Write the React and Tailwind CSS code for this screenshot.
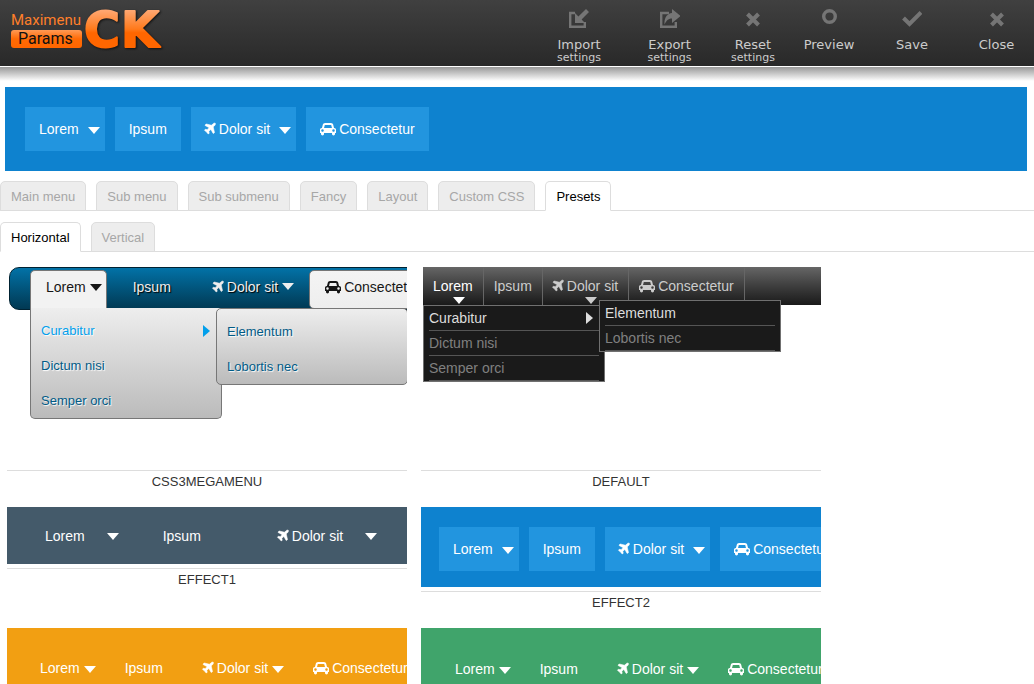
import { useState } from 'react';
import clsx from 'clsx';

const TOOLS = [
  { label: 'Import', sub: 'settings', icon: 'import', width: 'w-[94px]' },
  { label: 'Export', sub: 'settings', icon: 'export', width: 'w-[87px]' },
  { label: 'Reset', sub: 'settings', icon: 'cross', width: 'w-[80px]' },
  { label: 'Preview', icon: 'circle', width: 'w-[72px]' },
  { label: 'Save', icon: 'check', width: 'w-[94px]' },
  { label: 'Close', icon: 'cross', width: 'w-[75px]' },
];

const ITEMS = [
  { label: 'Lorem', arrow: true },
  { label: 'Ipsum' },
  { label: 'Dolor sit', icon: 'plane', arrow: true },
  { label: 'Consectetur', icon: 'car' },
];

const TABS = ['Main menu', 'Sub menu', 'Sub submenu', 'Fancy', 'Layout', 'Custom CSS', 'Presets'];

function ToolIcon({ name }) {
  return (
    <svg width="20" height="20" viewBox="0 0 20 20" fill="none" stroke="currentColor" aria-hidden="true">
      {name === 'import' && (
        <>
          <path d="M6 4H1.200v13.800h14.600V13" strokeWidth="2.4" />
          <path d="M6 14V4l3.400 3.400L17 0l3 3-7.400 7.600L16 14z" fill="currentColor" stroke="none" />
        </>
      )}
      {name === 'export' && (
        <>
          <path d="M9 4H1.200v13.800h14.600V13" strokeWidth="2.400" />
          <path d="M12 0l8.500 7-8.500 7V9.500C9 9.500 6.500 11 4.500 15.500 4 9 7 4.500 12 4z" fill="currentColor" stroke="none" />
        </>
      )}
      {name === 'cross' && <path d="M4.500 5l11 11M15.500 5l-11 11" strokeWidth="4" />}
      {name === 'circle' && <circle cx="10.500" cy="7.500" r="5.800" strokeWidth="3.400" />}
      {name === 'check' && <path d="M1.500 9l6 6L19 3.500" strokeWidth="4" />}
    </svg>
  );
}

function PlaneIcon() {
  return (
    <svg
      className="h-[14px] w-[14px] -ml-[2px] mr-[2px] shrink-0"
      viewBox="0 0 1792 1792"
      fill="currentColor"
      stroke="currentColor"
      strokeWidth="70"
      aria-hidden="true"
    >
      <path d="M1568 160q44 52 12 148t-108 172l-161 161 160 696q5 19-12 33l-128 96q-7 6-19 6-4 0-7-1-15-3-21-16l-279-508-259 259 53 194q5 17-8 31l-96 96q-9 9-23 9h-2q-15-2-24-13l-189-252-252-189q-11-7-13-23-1-13 9-25l96-97q9-9 23-9 6 0 8 1l194 53 259-259-508-279q-14-8-17-24-2-16 9-27l128-128q14-13 30-8l665 159 160-160q76-76 172-108t148 12z" />
    </svg>
  );
}

function CarIcon() {
  return (
    <svg className="h-[14px] w-4 mr-[3px] shrink-0" viewBox="0 0 2048 1792" fill="currentColor" aria-hidden="true">
      <path d="M480 1088q0-66-47-113t-113-47-113 47-47 113 47 113 113 47 113-47 47-113zm36-320h1016l-89-357q-2-8-14-17.500t-21-9.500h-768q-9 0-21 9.500t-14 17.500zm1372 320q0-66-47-113t-113-47-113 47-47 113 47 113 113 47 113-47 47-113zm160-96v384q0 14-9 23t-23 9h-96v128q0 80-56 136t-136 56-136-56-56-136v-128h-1024v128q0 80-56 136t-136 56-136-56-56-136v-128h-96q-14 0-23-9t-9-23v-384q0-93 65.500-158.500t158.500-65.500h28l105-419q23-94 104-157.500t179-63.500h768q98 0 179 63.500t104 157.500l105 419h28q93 0 158.500 65.500t65.500 158.500z" />
    </svg>
  );
}

function Down({ className }) {
  return (
    <svg className={clsx('h-[7px] w-3 shrink-0', className)} viewBox="0 0 12 7" fill="currentColor" aria-hidden="true">
      <path d="M0 0h12L6 7z" />
    </svg>
  );
}

function Right({ className }) {
  return (
    <svg className={clsx('h-3 w-[7px] shrink-0', className)} viewBox="0 0 7 12" fill="currentColor" aria-hidden="true">
      <path d="M0 0l7 6-7 6z" />
    </svg>
  );
}

function Label({ item }) {
  return (
    <span className="flex items-center whitespace-nowrap">
      {item.icon === 'plane' && <PlaneIcon />}
      {item.icon === 'car' && <CarIcon />}
      <span>{item.label}</span>
    </span>
  );
}

// flat menu bar : every item is a link, the arrow sits after the label
function FlatMenu({ items = ITEMS, className, itemClass, plainClass, arrowClass }) {
  return (
    <ul className={clsx('flex text-sm text-white', className)}>
      {items.map((item) => (
        <li key={item.label} className="shrink-0">
          <a href="#" className={clsx('flex items-center', itemClass, item.arrow ? arrowClass : plainClass)}>
            <Label item={item} />
            {item.arrow && <Down className="mt-[2px]" />}
          </a>
        </li>
      ))}
    </ul>
  );
}

function EffectTiles({ className }) {
  return (
    <FlatMenu
      className={clsx('gap-[10px] bg-[#0e82cf]', className)}
      itemClass="h-11 bg-[#2295df]"
      plainClass="px-[14px]"
      arrowClass="pl-[14px] pr-[5px] gap-[9px]"
    />
  );
}

function MegaMenu() {
  return (
    <div className="relative h-[199px] pl-[2px] overflow-hidden">
      <ul className="flex gap-[10px] w-[480px] h-[43px] pl-5 pt-[2px] rounded-[10px] border border-[#002232] bg-linear-to-b from-[#0272a7] to-[#013953] text-sm text-[#eee]">
        {ITEMS.map((item, i) => (
          <li key={item.label} className="relative shrink-0">
            <a
              href="#"
              className={clsx(
                'flex h-[39px] items-center gap-1 pl-[15px] pb-[6px] border',
                item.arrow ? 'pr-1' : 'pr-[15px]',
                i === 0 && 'rounded-t-[5px] border-[#777] border-b-0 bg-[#f2f2f2] text-[#161616]',
                i === 3 && 'rounded-[5px] border-[#777] bg-linear-to-b from-[#f4f4f4] to-[#eee] text-[#161616]',
                (i === 1 || i === 2) && 'border-transparent text-shadow-[1px_1px_1px_#000]'
              )}
            >
              <Label item={item} />
              {item.arrow && <Down />}
            </a>
          </li>
        ))}
      </ul>
      {/* opened dropdown and its submenu */}
      <ul className="absolute left-[23px] top-[41px] w-[192px] h-[111px] pt-[5px] px-[10px] rounded-b-[5px] border border-t-0 border-[#777] bg-linear-to-b from-[#eee] to-[#bbb] text-[13px] text-[#015b86] text-shadow-[1px_1px_1px_#fff]">
        <li className="text-[#029feb]">
          <a href="#" className="flex h-[35px] items-center justify-between">
            Curabitur <Right className="mr-[1px]" />
          </a>
        </li>
        <li><a href="#" className="flex h-[35px] items-center">Dictum nisi</a></li>
        <li><a href="#" className="flex h-[35px] items-center">Semper orci</a></li>
      </ul>
      <ul className="absolute left-[209px] top-[41px] w-[192px] h-[77px] pt-[5px] px-[10px] rounded-[5px] border border-[#777] bg-linear-to-b from-[#eee] to-[#bbb] text-[13px] text-[#015b86] text-shadow-[1px_1px_1px_#fff]">
        <li><a href="#" className="flex h-[35px] items-center">Elementum</a></li>
        <li><a href="#" className="flex h-[35px] items-center">Lobortis nec</a></li>
      </ul>
    </div>
  );
}

function DefaultMenu() {
  return (
    <div className="relative h-[199px] pl-[2px] overflow-hidden">
      <ul className="flex h-[38px] bg-linear-to-b from-[#666] to-[#1a1a1a] text-sm text-[#ccc]">
        {ITEMS.map((item, i) => (
          <li key={item.label} className="relative border-r border-[#666]">
            <a href="#" className={clsx('flex h-[38px] items-center px-[10px]', i === 0 && 'text-white')}>
              <Label item={item} />
              {item.arrow && (
                <Down className={clsx('absolute top-[30px]', i === 0 ? 'left-[30px]' : 'left-[42px]')} />
              )}
            </a>
          </li>
        ))}
      </ul>
      <ul className="absolute left-[2px] top-[38px] w-[182px] px-[5px] border border-[#707070] bg-[#1a1a1a] text-sm text-[#808080]">
        <li className="border-b border-[#555] text-[#ddd]">
          <a href="#" className="flex h-6 items-center justify-between">
            Curabitur <Right className="mr-[6px]" />
          </a>
        </li>
        <li className="border-b border-[#555]"><a href="#" className="flex h-6 items-center">Dictum nisi</a></li>
        <li className="border-b border-[#555]"><a href="#" className="flex h-6 items-center">Semper orci</a></li>
      </ul>
      <ul className="absolute left-[178px] top-[33px] w-[182px] px-[5px] border border-[#707070] bg-[#1a1a1a] text-sm text-[#808080]">
        <li className="border-b border-[#555] text-[#ddd]"><a href="#" className="flex h-6 items-center">Elementum</a></li>
        <li className="border-b border-[#555]"><a href="#" className="flex h-6 items-center">Lobortis nec</a></li>
      </ul>
    </div>
  );
}

function Preset({ name, children }) {
  return (
    <figure className="min-w-0">
      <div className="overflow-hidden">{children}</div>
      {name && (
        <figcaption className="mt-1 border-t border-[#ddd] pt-[2px] text-center text-[13px] leading-[18px] text-[#333]">
          {name}
        </figcaption>
      )}
    </figure>
  );
}

function TabBar({ tabs, active, onSelect }) {
  return (
    <div role="tablist" className="flex gap-[10px] border-b border-[#ddd] text-[13px]">
      {tabs.map((tab) => (
        <button
          key={tab}
          type="button"
          role="tab"
          aria-selected={tab === active}
          onClick={() => onSelect(tab)}
          className={clsx(
            '-mb-px h-[30px] px-[10px] pt-[2px] rounded-t-[5px] border border-[#ddd] whitespace-nowrap',
            tab === active ? 'bg-white border-b-white text-black' : 'bg-[#ededed] text-[#a7a7a7]'
          )}
        >
          {tab}
        </button>
      ))}
    </div>
  );
}

function Logo() {
  return (
    <svg width="160" height="50" viewBox="0 0 160 50" className="overflow-visible" role="img" aria-label="Maximenu Params CK">
      <defs>
        <linearGradient id="ck" x1="0" y1="10" x2="0" y2="48" gradientUnits="userSpaceOnUse">
          <stop offset="0" stopColor="#ffa873" />
          <stop offset="0.500" stopColor="#ff7a1c" />
          <stop offset="0.600" stopColor="#ff6600" />
          <stop offset="1" stopColor="#ff6600" />
        </linearGradient>
        <linearGradient id="plate" x1="0" y1="0" x2="0" y2="1">
          <stop offset="0" stopColor="#ff9a55" />
          <stop offset="0.500" stopColor="#ff6a05" />
          <stop offset="1" stopColor="#ff6600" />
        </linearGradient>
      </defs>
      <text x="1" y="25" fontSize="15" fill="#ff7f2a" className="font-[Roboto,sans-serif]">Maximenu</text>
      <rect x="1" y="30" width="71" height="18" rx="3" fill="url(#plate)" />
      <text x="8" y="44" fontSize="16" fill="#111" className="font-[Roboto,sans-serif]">Params</text>
      <g
        fontSize="49"
        fontWeight="700"
        fill="url(#ck)"
        stroke="url(#ck)"
        strokeWidth="2"
        strokeLinejoin="round"
        className="font-['DejaVu_Sans',sans-serif] drop-shadow-[1px_1px_1px_#111]"
      >
        <text x="74" y="47">C</text>
        <text x="111" y="47">K</text>
      </g>
    </svg>
  );
}

export default function App() {
  const [tab, setTab] = useState('Presets');
  const [orientation, setOrientation] = useState('Horizontal');

  return (
    <div className="h-screen overflow-hidden bg-white font-['Liberation_Sans',Arial,sans-serif]">
      <header className="flex h-[66px] items-start justify-between bg-linear-to-b from-[#404040] to-[#292929] pl-[10px]">
        <Logo />
        <nav className="flex font-['DejaVu_Sans',Verdana,sans-serif] text-[#ccc]">
          {TOOLS.map((tool) => (
            <button key={tool.label} type="button" className={clsx('flex flex-col items-center pt-[9px]', tool.width)}>
              <span className="text-[#757575]"><ToolIcon name={tool.icon} /></span>
              <span className="mt-2 text-[13px] leading-4">{tool.label}</span>
              {tool.sub && <span className="text-[11px] leading-[10px]">{tool.sub}</span>}
            </button>
          ))}
        </nav>
      </header>
      <div className="mt-px mb-[6px] h-[14px] bg-linear-to-b from-[#999] to-white" />

      <div className="ml-[5px] mr-[7px] mb-[10px]">
        <EffectTiles className="p-5" />
      </div>

      <TabBar tabs={TABS} active={tab} onSelect={setTab} />
      <div className="mt-[11px]">
        <TabBar tabs={['Horizontal', 'Vertical']} active={orientation} onSelect={setOrientation} />
      </div>

      <main className="grid grid-cols-[400px_400px] gap-x-[14px] gap-y-4 px-[7px] pt-[15px]">
        <Preset name="CSS3MEGAMENU"><MegaMenu /></Preset>
        <Preset name="DEFAULT"><DefaultMenu /></Preset>
        <Preset name="EFFECT1">
          <FlatMenu
            items={ITEMS.slice(0, 3)}
            className="h-[57px] items-center bg-[#445a6a]"
            plainClass="px-[39px]"
            arrowClass="pl-[38px] pr-[5px] gap-[22px]"
          />
        </Preset>
        <Preset name="EFFECT2">
          <EffectTiles className="h-20 pt-5 pl-[18px]" />
        </Preset>
        <Preset>
          <FlatMenu className="h-20 items-center bg-[#f29f12] pl-[13px]" plainClass="px-5" arrowClass="pl-5 pr-[9px] gap-1" />
        </Preset>
        <Preset>
          <FlatMenu className="h-[82px] items-center bg-[#40a46b] pl-[14px]" plainClass="px-5" arrowClass="pl-5 pr-[9px] gap-1" />
        </Preset>
      </main>
    </div>
  );
}
